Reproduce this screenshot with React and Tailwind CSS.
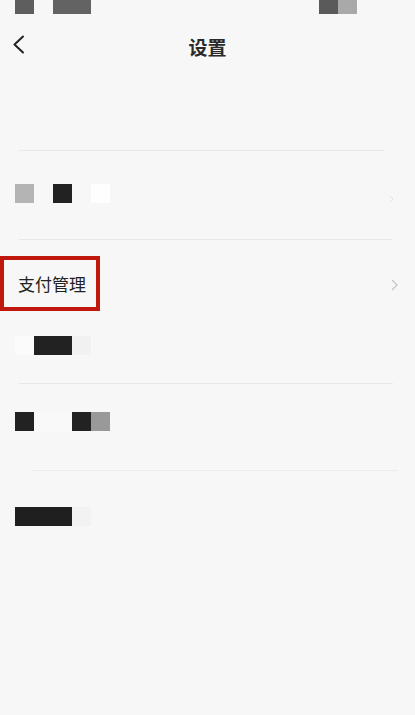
export default function App() {
  const font = { fontFamily: '"Noto Sans CJK SC", "Noto Sans", sans-serif' };
  return (
    <div className="w-[415px] h-[715px] bg-[#f7f7f7] flex flex-col overflow-hidden" style={font}>
      {/* status bar */}
      <div className="h-[14px] flex shrink-0">
        <div className="ml-[15px] w-[19px] h-[14px] bg-[#5e5e5e]" />
        <div className="ml-[19px] w-[38px] h-[14px] bg-[#636363]" />
        <div className="ml-auto w-[19px] h-[14px] bg-[#5a5a5a]" />
        <div className="w-[19px] h-[14px] bg-[#a9a9a9] mr-[58px]" />
      </div>
      {/* header */}
      <div className="h-[64px] shrink-0 relative flex items-center justify-center">
        <svg className="absolute left-[11px] top-[20px]" width="16" height="22" viewBox="0 0 16 22" fill="none">
          <path d="M12 2.5 L3.5 10.5 L12 18.5" stroke="#222" strokeWidth="2" strokeLinecap="round" strokeLinejoin="round" />
        </svg>
        <span className="text-[19px] font-bold text-[#2a2a2a] leading-none">设置</span>
      </div>
      <div className="h-[72px] shrink-0" />
      <div className="h-px ml-[19px] mr-[31px] bg-[#e8e8e8] shrink-0" />
      {/* row 1 */}
      <div className="h-[88px] shrink-0 flex items-start pt-[33px] relative">
        <div className="ml-[15px] w-[19px] h-[19px] bg-[#b4b4b4]" />
        <div className="ml-[19px] w-[19px] h-[19px] bg-[#222]" />
        <div className="ml-[19px] w-[19px] h-[19px] bg-[#fefefe]" />
        <svg className="absolute right-[21px] top-[44px]" width="5" height="8" viewBox="0 0 5 8" fill="none">
          <path d="M1 1 L4 4 L1 7" stroke="#e2e2e2" strokeWidth="1" />
        </svg>
      </div>
      <div className="h-px ml-[19px] mr-[23px] bg-[#e8e8e8] shrink-0" />
      {/* payment row */}
      <div className="shrink-0 pt-[16px] relative">
        <div className="w-[100px] h-[55px] border-[4px] border-[#c1180e] flex items-center pl-[14px]">
          <span className="text-[17px] text-[#222] leading-none whitespace-nowrap">支付管理</span>
        </div>
        <svg className="absolute right-[17px] top-[39px]" width="7" height="12" viewBox="0 0 7 12" fill="none">
          <path d="M1 1 L6 6 L1 11" stroke="#c4c4c4" strokeWidth="1.2" />
        </svg>
        <div className="flex mt-[25px] mb-[28px]">
          <div className="ml-[15px] w-[19px] h-[19px] bg-[#fbfbfb]" />
          <div className="w-[38px] h-[19px] bg-[#222]" />
          <div className="w-[19px] h-[19px] bg-[#f1f1f1]" />
        </div>
      </div>
      <div className="h-px ml-[19px] mr-[22px] bg-[#e8e8e8] shrink-0" />
      {/* row 4 */}
      <div className="shrink-0 flex pt-[28px] pb-[39px]">
        <div className="ml-[15px] w-[19px] h-[19px] bg-[#222]" />
        <div className="w-[38px] h-[19px] bg-[#f9f9f9]" />
        <div className="w-[19px] h-[19px] bg-[#222]" />
        <div className="w-[19px] h-[19px] bg-[#999]" />
      </div>
      <div className="h-px ml-[33px] mr-[17px] bg-[#ebebeb] shrink-0" />
      {/* row 5 */}
      <div className="shrink-0 flex pt-[36px]">
        <div className="ml-[15px] w-[57px] h-[19px] bg-[#1f1f1f]" />
        <div className="w-[19px] h-[19px] bg-[#f2f2f2]" />
      </div>
    </div>
  );
}
